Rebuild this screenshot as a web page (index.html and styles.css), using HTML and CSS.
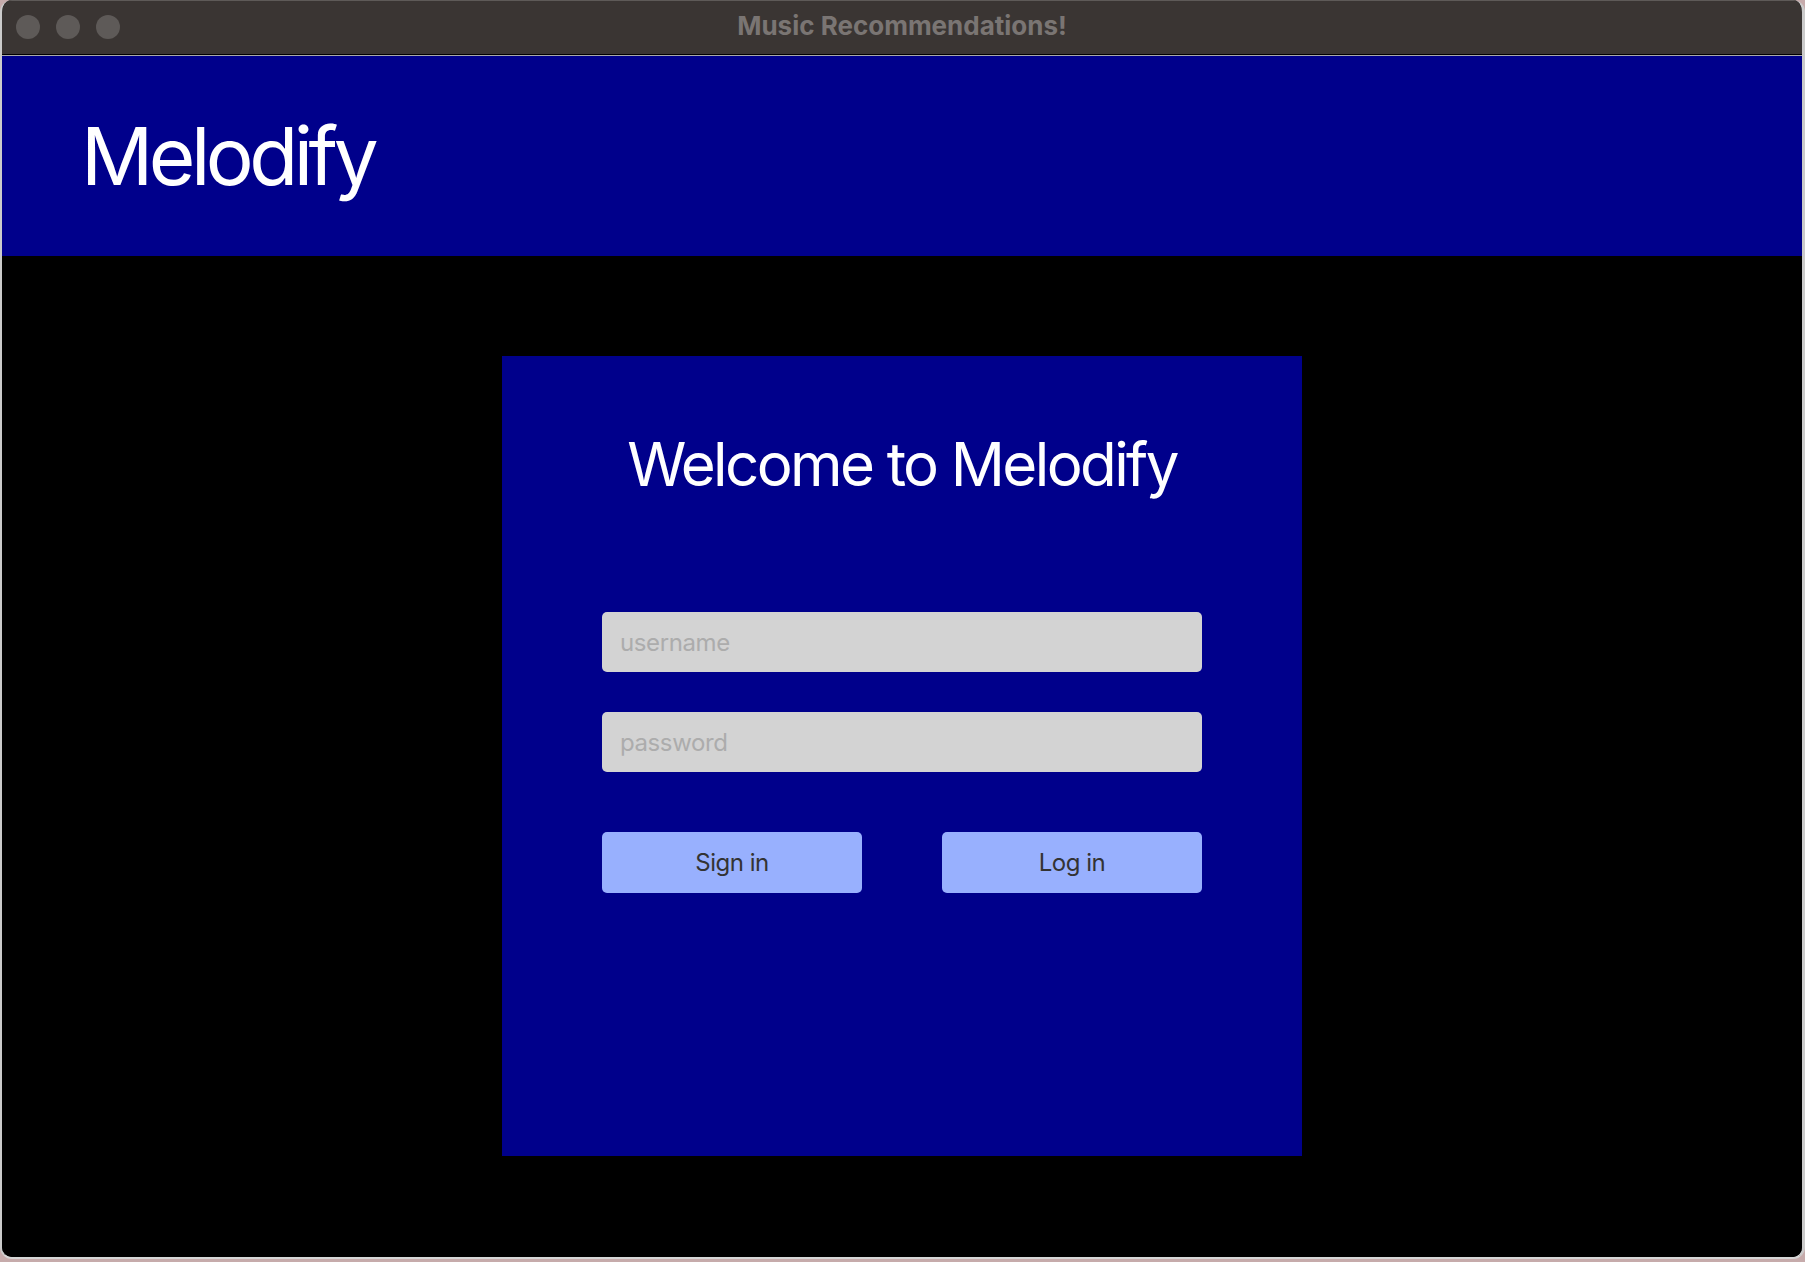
FILE: index.html
```html
<!DOCTYPE html>
<html lang="en">
<head>
<meta charset="utf-8">
<title>Music Recommendations!</title>
<link rel="stylesheet" href="styles.css">
</head>
<body>
<div class="window">
  <div class="titlebar">
    <div class="lights">
      <span class="light"></span>
      <span class="light"></span>
      <span class="light"></span>
    </div>
    <div class="wintitle">Music Recommendations!</div>
  </div>
  <header class="header">
    <h1 class="brand">Melodify</h1>
  </header>
  <main class="main">
    <section class="card">
      <h2 class="welcome">Welcome to Melodify</h2>
      <input class="field field-first" type="text" placeholder="username">
      <input class="field field-second" type="password" placeholder="password">
      <div class="actions">
        <button class="btn" type="button">Sign in</button>
        <button class="btn" type="button">Log in</button>
      </div>
    </section>
  </main>
</div>
</body>
</html>
```
FILE: styles.css
```css
html, body {
  margin: 0;
  padding: 0;
}
body {
  width: 1805px;
  height: 1262px;
  background: #c6abab;
  font-family: Inter, "Noto Sans", sans-serif;
  overflow: hidden;
}
.window {
  width: 1805px;
  height: 1259px;
  box-sizing: border-box;
  border-left: 2px solid #cbcbcb;
  border-right: 3px solid #cbcbcb;
  border-bottom: 2px solid #d6d6d6;
  border-radius: 12px;
  overflow: hidden;
  background: #000;
  display: flex;
  flex-direction: column;
}
.titlebar {
  height: 55px;
  flex: none;
  background: #3a3533;
  border-top: 1px solid #5e5a58;
  box-sizing: border-box;
  border-bottom: 1px solid #000;
  box-shadow: 0 1px 0 #a9a9a9;
  margin-bottom: 1px;
  display: flex;
  align-items: center;
  position: relative;
}
.lights {
  display: flex;
  gap: 16px;
  padding-left: 14px;
  margin-top: -2px;
}
.light {
  width: 24px;
  height: 24px;
  border-radius: 50%;
  background: #5e5a58;
}
.wintitle {
  position: absolute;
  left: 0;
  right: 0;
  top: 10px;
  text-align: center;
  font-size: 26px;
  font-weight: 700;
  color: #7a7573;
  line-height: 30px;
}
.header {
  height: 200px;
  flex: none;
  background: #00008b;
  display: flex;
  align-items: center;
  padding-left: 79px;
}
.brand {
  margin: 0;
  font-size: 80px;
  font-weight: 400;
  line-height: 1;
  color: #fff;
  letter-spacing: -4.5px;
}
.main {
  flex: 1;
  background: #000;
  padding-top: 100px;
  display: flex;
  justify-content: center;
  align-items: flex-start;
}
.card {
  width: 800px;
  height: 800px;
  background: #00008b;
  box-sizing: border-box;
  padding-top: 78px;
  display: flex;
  flex-direction: column;
  align-items: center;
}
.welcome {
  margin: 0;
  font-size: 60px;
  font-weight: 400;
  line-height: 1;
  color: #fff;
  letter-spacing: -2.6px;
}
.field {
  width: 600px;
  height: 60px;
  box-sizing: border-box;
  border: none;
  border-radius: 5px;
  background: #d3d3d3;
  padding: 0 18px;
  font-family: Inter, "Noto Sans", sans-serif;
  font-size: 24px;
  letter-spacing: -0.4px;
  color: #333;
  outline: none;
}
.field::placeholder {
  color: #acacac;
}
.field-first {
  margin-top: 118px;
}
.field-second {
  margin-top: 40px;
}
.actions {
  width: 600px;
  margin-top: 60px;
  display: flex;
  justify-content: space-between;
}
.btn {
  width: 260px;
  height: 61px;
  border: none;
  border-radius: 5px;
  background: #98b0fe;
  font-family: Inter, "Noto Sans", sans-serif;
  font-size: 24px;
  color: #333;
  padding: 0;
  letter-spacing: -0.5px;
}
```
